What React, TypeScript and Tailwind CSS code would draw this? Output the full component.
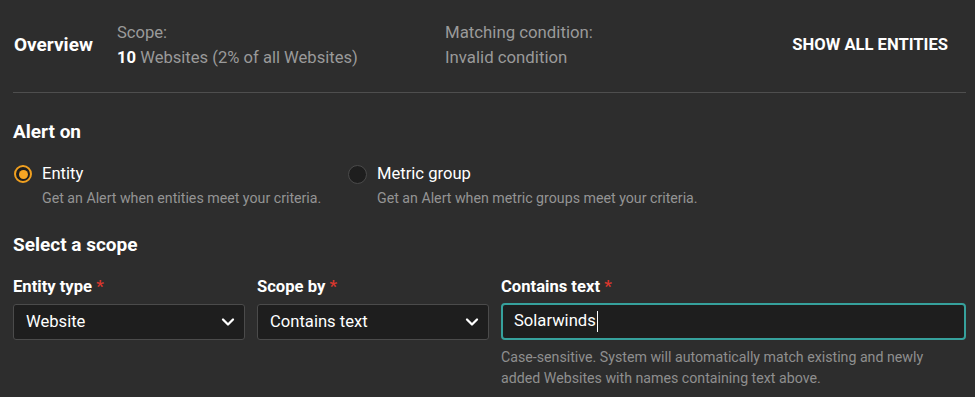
import { ChevronDown } from 'lucide-react';

function Radio({ checked, title, desc }: { checked?: boolean; title: string; desc: string }) {
  return (
    <div className="flex gap-[10px]">
      {checked ? (
        <span className="mt-[3px] flex h-[18px] w-[18px] items-center justify-center rounded-full border-2 border-[#f0a020] bg-[#1f1f1f]">
          <span className="h-[9px] w-[9px] rounded-full bg-[#f5a524]" />
        </span>
      ) : (
        <span className="mt-[3px] h-[19px] w-[19px] rounded-full border border-[#4a4a4a] bg-[#1e1e1e]" />
      )}
      <div>
        <div className="text-[16.6px] leading-[24px] text-white">{title}</div>
        <div className="mt-[2px] text-[14.2px] leading-[20px] text-[#949494]">{desc}</div>
      </div>
    </div>
  );
}

function Label({ text }: { text: string }) {
  return (
    <div className="mb-[7px] text-[16.6px] font-bold leading-[20px] text-white">
      {text} <span className="text-[#d8372d]">*</span>
    </div>
  );
}

function Select({ value }: { value: string }) {
  return (
    <div className="flex h-[36px] items-center justify-between rounded-[3px] border border-[#4b4b4b] bg-[#1e1e1e] pl-[12px] pr-[6px]">
      <span className="pt-[1px] text-[16.6px] text-white">{value}</span>
      <ChevronDown className="h-5 w-5 text-white" strokeWidth={2.75} />
    </div>
  );
}

export default function App() {
  return (
    <div className="h-[397px] w-[975px] overflow-hidden bg-[#2d2d2d] pl-[13px] pr-[9px] font-['Roboto',sans-serif]">
      <div className="flex h-[93px] items-center border-b border-[#4e4e4e] pb-[2px]">
        <div className="w-[104px] pl-[1px] text-[19px] font-bold text-white">Overview</div>
        <div className="w-[328px] text-[16.6px] leading-[25px] text-[#9a9a9a]">
          <div>Scope:</div>
          <div>
            <span className="font-bold text-white">10</span> Websites (2% of all Websites)
          </div>
        </div>
        <div className="flex-1 text-[16.8px] leading-[25px] text-[#9a9a9a]">
          <div>Matching condition:</div>
          <div>Invalid condition</div>
        </div>
        <div className="pr-[18px] text-[16.6px] font-bold text-white">SHOW ALL ENTITIES</div>
      </div>

      <div className="pt-[27px] text-[19px] font-bold leading-[24px] text-white">Alert on</div>
      <div className="mt-[18px] flex">
        <div className="w-[335px] pl-[1px]">
          <Radio checked title="Entity" desc="Get an Alert when entities meet your criteria." />
        </div>
        <Radio title="Metric group" desc="Get an Alert when metric groups meet your criteria." />
      </div>

      <div className="mt-[25px] text-[19px] font-bold leading-[24px] text-white">Select a scope</div>

      <div className="mt-[20px] flex gap-[12px]">
        <div className="w-[232px]">
          <Label text="Entity type" />
          <Select value="Website" />
        </div>
        <div className="w-[232px]">
          <Label text="Scope by" />
          <Select value="Contains text" />
        </div>
        <div className="flex-1">
          <Label text="Contains text" />
          <div className="-mt-[1px] flex h-[37px] items-center rounded-[4px] border-2 border-[#36a19c] bg-[#1e1e1e] pl-[11px]">
            <span className="text-[16.6px] text-white">Solarwinds</span>
            <span className="ml-[1px] h-[21px] w-[1px] bg-white" />
          </div>
          <div className="mt-[7px] text-[14.2px] leading-[21px] text-[#8f8f8f]">
            Case-sensitive. System will automatically match existing and newly
            <br />
            added Websites with names containing text above.
          </div>
        </div>
      </div>
    </div>
  );
}
